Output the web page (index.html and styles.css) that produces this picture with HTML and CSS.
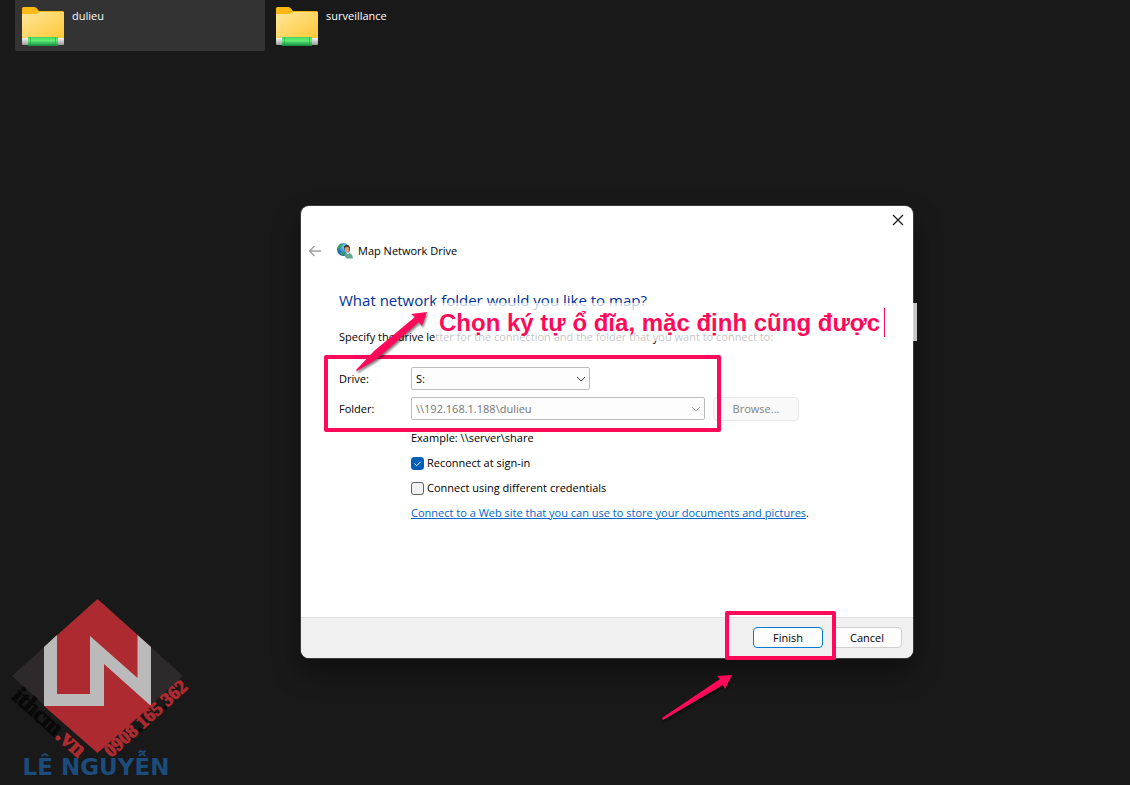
FILE: index.html
```
<!DOCTYPE html>
<html lang="en">
<head>
<meta charset="utf-8">
<title>Map Network Drive</title>
<link rel="stylesheet" href="styles.css">
</head>
<body>
<svg class="defs" aria-hidden="true">
  <defs>
    <linearGradient id="paper" x1="0" y1="0" x2="1" y2="1"><stop offset="0" stop-color="#ffe69c"/><stop offset="1" stop-color="#ffc833"/></linearGradient>
    <linearGradient id="pipe" x1="0" y1="0" x2="0" y2="1"><stop offset="0" stop-color="#45d65c"/><stop offset=".4" stop-color="#62ee78"/><stop offset="1" stop-color="#128a3c"/></linearGradient>
    <linearGradient id="metal" x1="0" y1="0" x2="0" y2="1"><stop offset="0" stop-color="#f4f4f4"/><stop offset="1" stop-color="#9b9b9b"/></linearGradient>
    <radialGradient id="globe" cx=".6" cy=".3" r=".8"><stop offset="0" stop-color="#7fe3f5"/><stop offset=".5" stop-color="#2f8fd0"/><stop offset="1" stop-color="#0c3f94"/></radialGradient>
    <symbol id="folder-icon" viewBox="0 0 42 39">
      <path d="M0 1.500Q0 0 1.500 0H12Q13.500 0 14.500 1L17 4H40.500Q42 4 42 5.500V20H0Z" fill="#fdb913"/>
      <path d="M0 7H13Q14.500 7 15.500 6L17 5H41Q42 5 42 6V32H0Z" fill="url(#paper)"/>
      <rect y="31" width="42" height="7" rx="1" fill="url(#metal)"/>
      <rect x="6" y="30" width="30" height="9" fill="url(#pipe)"/>
      <path d="M8.500 30V39M33.500 30V39" stroke="#149a3c" stroke-opacity=".5"/>
    </symbol>
  </defs>
</svg>

<main class="desktop">
  <ul class="files">
    <li class="file selected"><svg class="folder"><use href="#folder-icon"/></svg><span>dulieu</span></li>
    <li class="file"><svg class="folder"><use href="#folder-icon"/></svg><span>surveillance</span></li>
  </ul>

  <form class="dialog" aria-labelledby="dialog-title">
    <div class="titlebar">
      <button type="button" class="icon-button" aria-label="Close"><svg width="12" height="12" viewBox="0 0 12 12"><path d="M1 1L11 11M11 1L1 11" stroke="#1a1a1a" stroke-width="1.200"/></svg></button>
    </div>
    <header class="head">
      <button type="button" class="icon-button" aria-label="Back"><svg width="14" height="12" viewBox="0 0 14 12"><path d="M13 6H1.500M6.500 1L1.500 6L6.500 11" fill="none" stroke="#a0a0a0" stroke-width="1.400"/></svg></button>
      <svg class="app-icon" width="16" height="16" viewBox="0 0 16 16">
        <circle cx="6.500" cy="6.500" r="6.500" fill="url(#globe)"/>
        <path d="M1.500 3Q4 .500 6 1L4.500 3.500L3 4.500L2 6.500L.500 5.500ZM3.500 8.500L6 9.500L7 12L5 12.300Q3.500 11 3.500 8.500Z" fill="#3fa64a"/>
        <path d="M6.800 4Q8 .800 11 2Q13.800 3.500 12.500 8L8 8Z" fill="#54372a"/>
        <ellipse cx="10" cy="6.800" rx="2.200" ry="3" fill="#d39a78"/>
        <path d="M7.500 11Q8 9.500 10 9.500L12.500 10Q15.500 11 16 15.500H10Q7.500 14 7.500 11Z" fill="#5fa58c"/>
        <path d="M9 9.500L11 11.500L12.500 9.500" fill="#e7f4ec"/>
      </svg>
      <span id="dialog-title">Map Network Drive</span>
    </header>
    <section class="content">
      <h1>What network folder would you like to map?</h1>
      <p class="intro">Specify the drive letter for the connection and the folder that you want to connect to:</p>
      <div class="fields">
        <label for="drive">Drive:</label>
        <div class="field">
          <div class="picker short">
            <select id="drive"><option>S:</option></select>
            <svg class="chevron" viewBox="0 0 10 6"><path d="M1 1L5 5L9 1"/></svg>
          </div>
        </div>
        <label for="folder">Folder:</label>
        <div class="field">
          <div class="picker long">
            <select id="folder" disabled><option>\\192.168.1.188\dulieu</option></select>
            <svg class="chevron" viewBox="0 0 10 6"><path d="M1 1L5 5L9 1"/></svg>
          </div>
          <button type="button" class="button browse" disabled>Browse...</button>
        </div>
      </div>
      <div class="options">
        <p>Example: \\server\share</p>
        <label class="check"><input type="checkbox" checked><svg viewBox="0 0 13 13"><path d="M3.500 6.500L5.700 8.700L9.700 4.700"/></svg><span>Reconnect at sign-in</span></label>
        <label class="check"><input type="checkbox"><span>Connect using different credentials</span></label>
        <p class="web"><a href="#">Connect to a Web site that you can use to store your documents and pictures</a>.</p>
      </div>
    </section>
    <footer class="foot">
      <button type="submit" class="button primary">Finish</button>
      <button type="button" class="button">Cancel</button>
    </footer>

    <div class="veil"></div>
    <div class="frame frame-fields"></div>
    <div class="frame frame-finish"></div>
    <svg class="arrow arrow-up" width="80" height="70" viewBox="0 0 80 70"><path d="M3 62L21 43L62 9L58 6L74 4L69 18L66 14L24 51L4 63Z"/></svg>
    <svg class="arrow arrow-down" width="80" height="56" viewBox="0 0 80 56"><path d="M4 47L62 8L59 5L74 4L67 18L65 14L5 49Z"/></svg>
    <div class="note">Chọn ký tự ổ đĩa, mặc định cũng được</div>
  </form>

  <svg class="logo" width="200" height="195" viewBox="0 0 200 195" role="img" aria-label="Lê Nguyễn">
    <path d="M97.500 9L183 86L97.500 163L12 86Z" fill="#2e2a2c"/>
    <path d="M97.500 9L151 57V116L97.500 163L44 116V57Z" fill="#ad2b30"/>
    <path d="M44 57L57 45V104H90V46L137.500 88V45L151 57V116L104 74V116H44Z" fill="#bababa"/>
    <text class="site" transform="translate(11 108) rotate(42)">ithcm<tspan class="red">.vn</tspan></text>
    <text class="phone" transform="translate(111 168) rotate(-42)">0908<tspan class="dark">.</tspan>165<tspan class="dark">.</tspan>362</text>
    <text class="brand" x="96" y="185">LÊ NGUYỄN</text>
  </svg>
</main>
</body>
</html>
```
FILE: styles.css
```
* { box-sizing: border-box; }

body {
  margin: 0;
  background: #191919;
  color: #000;
  font: 11px/18px "Open Sans", "Noto Sans", sans-serif;
}

h1, p, ul { margin: 0; padding: 0; }

button, select { font: inherit; color: inherit; }

.defs { position: absolute; width: 0; height: 0; }

.desktop {
  position: relative;
  min-height: 100vh;
  overflow: hidden;
}

/* File tiles */
.files {
  display: flex;
  gap: 4px;
  padding-left: 15px;
  list-style: none;
}

.file {
  display: flex;
  gap: 8px;
  width: 250px;
  height: 51px;
  padding: 7px 7px 0;
  color: #fff;
}

.file.selected { background: #333; border-radius: 0 0 2px 2px; }

.folder { width: 42px; height: 39px; }

/* Dialog window */
.dialog {
  position: absolute;
  left: 301px;
  top: 206px;
  width: 612px;
  border-radius: 8px;
  background: #fff;
  box-shadow: 0 0 0 1px #3a3a3a, 0 14px 28px rgba(0, 0, 0, .4);
}

.titlebar {
  display: flex;
  justify-content: flex-end;
  align-items: center;
  height: 28px;
  padding-right: 9px;
}

.icon-button {
  display: flex;
  padding: 0;
  border: 0;
  background: none;
}

.head {
  display: flex;
  align-items: center;
  height: 34px;
  padding-left: 7px;
}

.app-icon { margin: 0 5px 0 15px; }

.content { min-height: 349px; padding: 20px 38px 0; }

h1 {
  color: #003399;
  font-size: 15px;
  font-weight: 400;
  line-height: 24px;
}

.intro { margin-top: 16px; }

.fields {
  display: grid;
  grid-template-columns: 72px 1fr;
  row-gap: 7px;
  align-items: center;
  margin-top: 21px;
}

.field { display: flex; gap: 8px; height: 23px; }

.picker { position: relative; }
.short { width: 179px; }
.long { width: 294px; }

.picker select {
  width: 100%;
  height: 23px;
  padding: 0 4px;
  border: 1px solid #bdbdbd;
  border-radius: 2px;
  background: #fdfdfd;
  appearance: none;
}

.picker select:disabled { color: #757575; opacity: 1; }

.chevron {
  position: absolute;
  right: 4px;
  top: 9px;
  width: 10px;
  height: 6px;
  fill: none;
  stroke: #444;
}

select:disabled + .chevron { stroke: #b0b0b0; }

.button {
  height: 21px;
  padding: 0;
  border: 1px solid #d0d0d0;
  border-radius: 4px;
  background: #fdfdfd;
}

.browse {
  width: 86px;
  height: 24px;
  border-color: #e8e8e8;
  background: #f9f9f9;
  color: #838383;
}

.options {
  display: flex;
  flex-direction: column;
  gap: 7px;
  padding: 9px 0 0 72px;
}

.check {
  position: relative;
  display: flex;
  align-items: center;
  gap: 3px;
}

.check input {
  width: 13px;
  height: 13px;
  margin: 0;
  border: 1px solid #626262;
  border-radius: 3px;
  background: #f3f3f3;
  appearance: none;
}

.check input:checked { border-color: #005fb8; background: #005fb8; }

.check svg {
  position: absolute;
  left: 0;
  width: 13px;
  height: 13px;
  fill: none;
  stroke: #fff;
  pointer-events: none;
}

a { color: #0066cc; }

.foot {
  display: flex;
  justify-content: flex-end;
  align-items: center;
  gap: 9px;
  height: 41px;
  padding: 0 11px 1px 0;
  border-top: 1px solid #dfdfdf;
  border-radius: 0 0 8px 8px;
  background: #f0f0f0;
}

.foot .button { width: 70px; }
.foot .primary { border-color: #0078d4; }

/* Annotations over the dialog */
.veil {
  position: absolute;
  left: 134px;
  top: 97px;
  width: 482px;
  height: 38px;
  background: rgba(255, 255, 255, .76);
}

.note {
  position: absolute;
  left: 138px;
  top: 102px;
  height: 29px;
  padding-right: 4px;
  border-right: 1px solid #ff0a5a;
  color: #ff0a5a;
  font: bold 24px/29px "Liberation Sans", Arial, sans-serif;
  white-space: nowrap;
}

.frame { position: absolute; border: 4px solid #ff0a5a; border-radius: 2px; }
.frame-fields { left: 23px; top: 149px; width: 397px; height: 77px; }
.frame-finish { left: 424px; top: 405px; width: 111px; height: 49px; }

.arrow {
  position: absolute;
  fill: #ff0a5a;
  filter: drop-shadow(1px 2px 1px rgba(0, 0, 0, .5));
}

.arrow-up { left: 52px; top: 102px; }
.arrow-down { left: 357px; top: 465px; }

/* Watermark */
.logo { position: absolute; left: 0; bottom: 0; }

.site, .phone { font-family: "Liberation Serif", "Times New Roman", serif; font-weight: 700; }
.site { font-size: 24px; fill: #080808; stroke: #080808; }
.phone { font-size: 19px; }
.phone, .red { fill: #ad2b30; stroke: #ad2b30; }
.dark { fill: #080808; stroke: #080808; }

.brand {
  fill: #1c4c7c;
  font: bold 23px "DejaVu Sans", sans-serif;
  text-anchor: middle;
}
```
